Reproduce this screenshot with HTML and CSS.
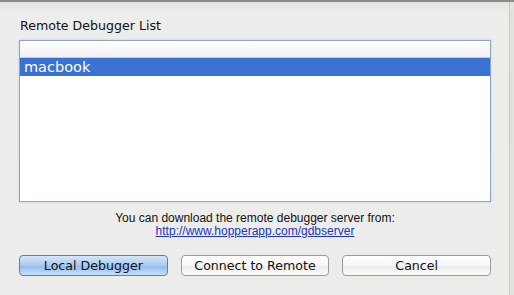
FILE: index.html
```html
<!DOCTYPE html>
<html lang="en">
<head>
    <meta charset="UTF-8">
    <title>Remote Debugger List</title>
    <link rel="stylesheet" href="styles.css">
</head>
<body>
    <div class="screen">
        <div class="sheet">
            <div class="sheet-title">Remote Debugger List</div>
            <div class="debugger-list">
                <div class="list-header"></div>
                <div class="list-row selected">macbook</div>
            </div>
            <p class="note">
                You can download the remote debugger server from:<br>
                <a href="#">http://www.hopperapp.com/gdbserver</a>
            </p>
            <div class="buttons">
                <button class="btn btn-default">Local Debugger</button>
                <button class="btn">Connect to Remote</button>
                <button class="btn">Cancel</button>
            </div>
        </div>
        <div class="edge"></div>
    </div>
</body>
</html>
```

FILE: styles.css
```css
html, body {
    margin: 0;
    padding: 0;
}
body {
    width: 514px;
    height: 295px;
    overflow: hidden;
    background: #ebebeb;
    font-family: "DejaVu Sans", "Liberation Sans", sans-serif;
    color: #111;
}
.screen {
    display: flex;
    height: 295px;
    border-top: 2px solid #8a8a86;
    box-sizing: border-box;
}
.sheet {
    width: 509px;
    padding: 16px 0 0 19px;
    box-sizing: border-box;
    background: linear-gradient(#e4e4e2, #ededeb 12px, #ececea);
}
.edge {
    flex: 1;
    background: #e2e2dc;
    border-left: 1px solid #c9c9c4;
}
.sheet-title {
    font-size: 12.6px;
    line-height: 16px;
    height: 22px;
    padding-left: 1px;
}
.debugger-list {
    width: 472px;
    height: 162px;
    box-sizing: border-box;
    border: 1px solid #8ea6c6;
    box-shadow: 0 0 2px #b8cde3;
    background: #fff;
}
.list-header {
    height: 16px;
    background: linear-gradient(#ffffff, #f1f1f3);
    border-bottom: 1px solid #c8ccd4;
}
.list-row {
    height: 18px;
    line-height: 18px;
    padding-left: 4px;
    font-size: 14.5px;
}
.selected {
    background: #3a72d2;
    color: #fff;
}
.note {
    margin: 10px 0 0;
    width: 472px;
    text-align: center;
    font-family: "Liberation Sans", Arial, sans-serif;
    font-size: 12px;
    line-height: 13px;
}
.note a {
    color: #1a33cc;
}
.buttons {
    display: flex;
    gap: 13px;
    width: 472px;
    margin-top: 17px;
}
.btn {
    flex: 1;
    height: 21px;
    padding: 0;
    font-family: "DejaVu Sans", sans-serif;
    font-size: 12.6px;
    color: #111;
    border: 1px solid #9b9b9b;
    border-radius: 4px;
    background: linear-gradient(#ffffff, #f6f6f6 50%, #ebebeb 51%, #fbfbfb);
}
.btn-default {
    border-color: #5f7fa8;
    background: linear-gradient(#d4e6fa, #a9cbf0 50%, #8fbaea 51%, #c6e0fa);
}
```
